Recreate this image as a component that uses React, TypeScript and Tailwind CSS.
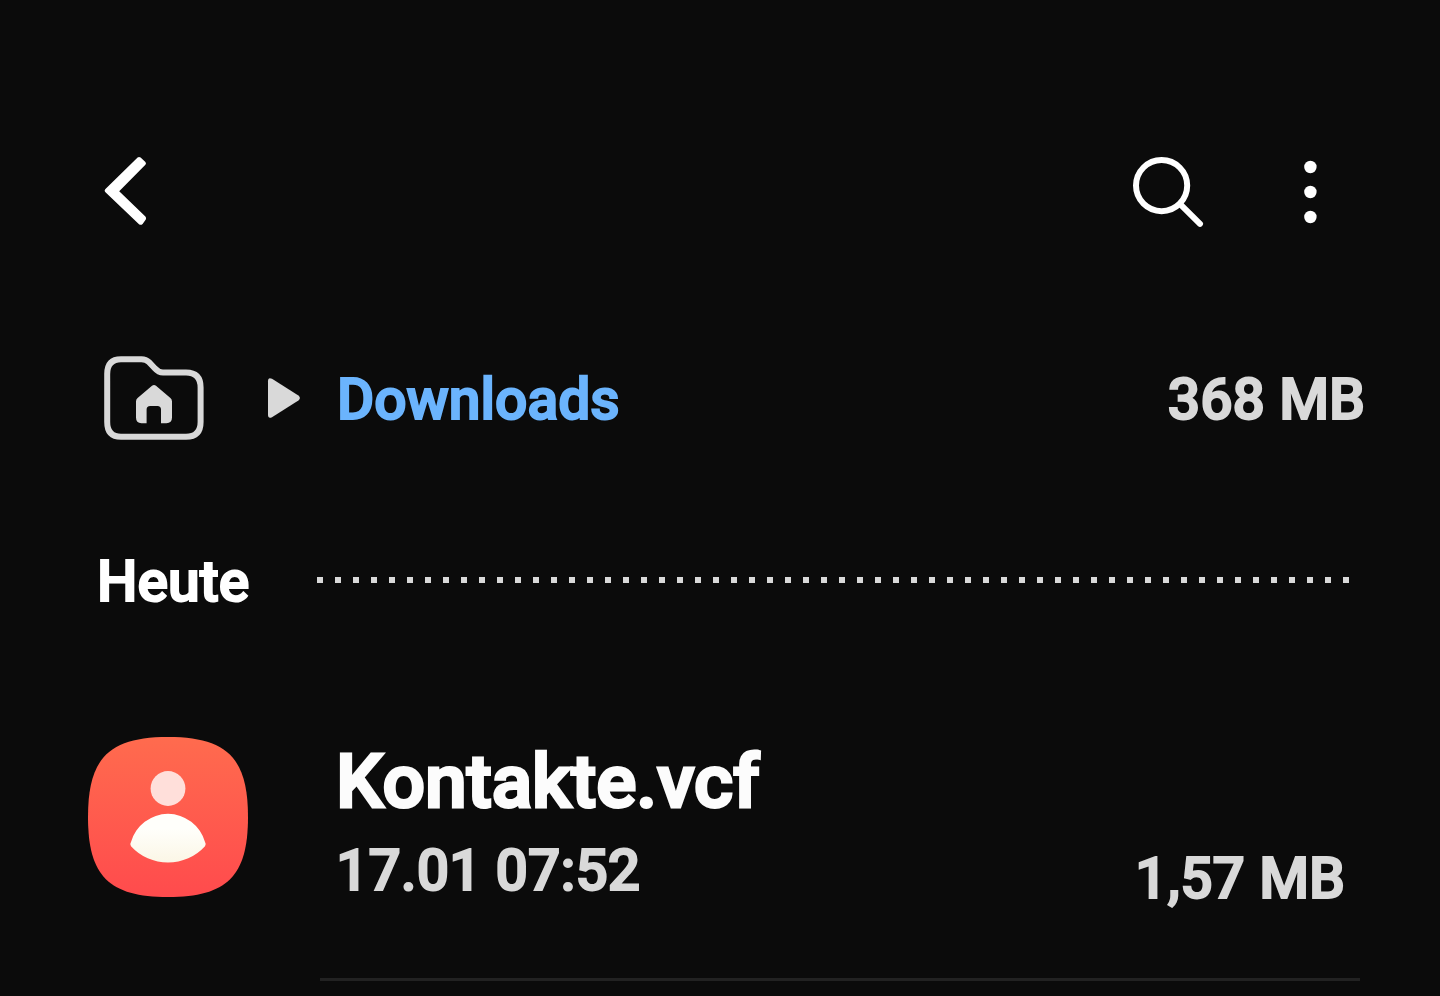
import React from "react";

const metaText =
  "pt-1 text-[57px] leading-[68px] font-medium [-webkit-text-stroke:2px_currentColor]";

function BackIcon() {
  return (
    <svg width="44" height="72" viewBox="0 0 44 72" aria-hidden="true">
      <path
        d="M33.6 1.6 Q35 0.4 36.6 1.6 L41.4 6 Q42.6 7.4 41.4 8.8 L15.2 35.2 L41.4 60.4 Q42.6 61.8 41.8 63.4 L38.6 68 Q36.8 69.6 35 68.2 L1.2 36 Q0 34.6 1.2 33.2Z"
        fill="#fff"
      />
    </svg>
  );
}

function SearchIcon() {
  return (
    <svg width="72" height="72" viewBox="0 0 72 72" fill="none" stroke="#fff" aria-hidden="true">
      <circle cx="29.6" cy="29.6" r="25.6" strokeWidth="6" />
      <path d="M48.4 48.4 L68 67.8" strokeWidth="6" strokeLinecap="round" />
    </svg>
  );
}

function MoreIcon() {
  return (
    <svg width="14" height="72" viewBox="0 0 14 72" fill="#fff" aria-hidden="true">
      <circle cx="7.4" cy="11" r="6.2" />
      <circle cx="7.4" cy="36" r="6.2" />
      <circle cx="7.4" cy="61" r="6.2" />
    </svg>
  );
}

function HomeFolderIcon() {
  return (
    <svg width="100" height="84" viewBox="0 0 100 84" aria-hidden="true">
      <path
        d="M17 3.2 H37.5 Q42 3.2 45 6.2 L50.5 12 Q54.5 16.5 59 16.5 H82 Q96.6 16.5 96.6 31.5 V66 Q96.6 80.8 82 80.8 H17 Q3.2 80.8 3.2 66 V18 Q3.2 3.2 17 3.2Z"
        fill="none"
        stroke="#d9d9d9"
        strokeWidth="6"
      />
      <path
        d="M48 29.8 Q50 28.4 52 29.8 L66.4 42 Q68 43.4 68 45.4 V61.6 Q68 67.2 62.4 67.2 H57 V53.6 Q57 50 53.4 50 H46.2 Q42.6 50 42.6 53.6 V67.2 H37.4 Q32 67.2 32 61.6 V45.4 Q32 43.4 33.6 42Z"
        fill="#d9d9d9"
      />
    </svg>
  );
}

function ArrowIcon() {
  return (
    <svg width="34" height="42" viewBox="0 0 34 42" aria-hidden="true">
      <path
        d="M1 4.2 Q1 0 5 1.8 L31.4 18.6 Q34.4 21 31.4 23.4 L5 40.2 Q1 42 1 37.8Z"
        fill="#d9d9d9"
      />
    </svg>
  );
}

function ContactIcon() {
  return (
    <svg width="160" height="160" viewBox="0 0 160 160" aria-hidden="true">
      <defs>
        <linearGradient id="tile" x1="0" y1="0" x2="0" y2="1">
          <stop offset="0" stopColor="#ff6b4e" />
          <stop offset="1" stopColor="#ff4b4d" />
        </linearGradient>
        <linearGradient id="body" x1="0" y1="0" x2="0" y2="1">
          <stop offset="0.3" stopColor="#fffffb" />
          <stop offset="1" stopColor="#fbf6e6" />
        </linearGradient>
      </defs>
      <path
        d="M80 0 C139 0 160 21 160 80 C160 139 139 160 80 160 C21 160 0 139 0 80 C0 21 21 0 80 0Z"
        fill="url(#tile)"
      />
      <circle cx="80" cy="51.5" r="17.4" fill="#ffdfda" />
      <path
        d="M43 105 A38.4 38.4 0 0 1 117 105 Q118.6 107.4 117 109.2 A50 50 0 0 1 43 109.2 Q41.4 107.4 43 105Z"
        fill="url(#body)"
      />
    </svg>
  );
}

export default function App() {
  return (
    <div className="min-h-screen bg-[#0b0b0b] pt-[156px] font-['Roboto',sans-serif] text-[#d9d9d9]">
      <header className="flex items-center justify-between pr-[123px] pl-[104px]">
        <button type="button" aria-label="Zurück" className="block">
          <BackIcon />
        </button>
        <div className="flex items-center gap-[99px]">
          <button type="button" aria-label="Suchen" className="block">
            <SearchIcon />
          </button>
          <button type="button" aria-label="Weitere Optionen" className="block">
            <MoreIcon />
          </button>
        </div>
      </header>

      <nav aria-label="Pfad" className="mt-32 flex items-center pr-[75px] pl-[104px]">
        <a href="#home" aria-label="Interner Speicher" className="block">
          <HomeFolderIcon />
        </a>
        <span className="ml-[63px] block">
          <ArrowIcon />
        </span>
        <a href="#downloads" className={`ml-9 text-[#6bb4fd] ${metaText}`}>
          Downloads
        </a>
        <span className={`ml-auto ${metaText}`}>368 MB</span>
      </nav>

      <main>
        <div className="mt-[104px] flex items-center gap-[68px] pr-[90px] pl-[97px]">
          <h2 className={`text-white ${metaText}`}>Heute</h2>
          <div
            aria-hidden="true"
            className="h-[6px] flex-1 bg-[repeating-linear-gradient(90deg,#d9d9d9_0_6px,transparent_6px_18px)]"
          />
        </div>

        <ul>
          <li>
            <a href="#kontakte" className="mt-[113px] flex h-44 items-center pr-[95px] pl-[88px]">
              <ContactIcon />
              <div className="ml-[88px] pt-2">
                <h3 className="text-[75px] leading-[88px] font-medium text-[#fcfcfc] [-webkit-text-stroke:3px_currentColor]">
                  Kontakte.vcf
                </h3>
                <p className={`mt-2 ${metaText}`}>17.01 07:52</p>
              </div>
              <span className={`-mb-2 ml-auto self-end ${metaText}`}>1,57 MB</span>
            </a>
            <div className="mt-[73px] mr-20 ml-80 h-[3px] bg-[#222]" />
          </li>
        </ul>
      </main>
    </div>
  );
}
